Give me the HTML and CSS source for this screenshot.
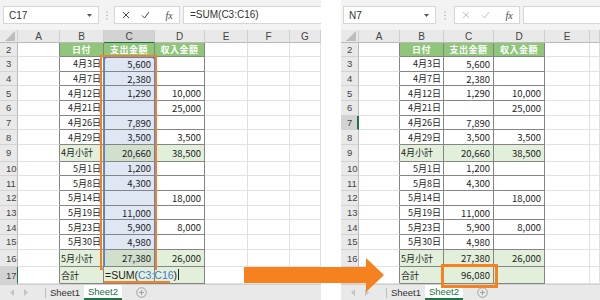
FILE: index.html
```html
<!DOCTYPE html>
<html lang="ja">
<head>
    <meta charset="UTF-8">
    <title>SUM</title>
    <link rel="stylesheet" href="styles.css">
</head>
<body>
<div class="page">

    <!-- before: editing C17 -->
    <section class="sheet sheet-left">
        <div class="toolbar">
            <div class="namebox">C17<svg width="5" height="3"><polygon points="0,0 5,0 2.5,3" fill="#555"/></svg></div>
            <div class="dots"><svg width="2" height="9"><circle cx="1" cy="1" r="0.8" fill="#b5b5b5"/><circle cx="1" cy="4.5" r="0.8" fill="#b5b5b5"/><circle cx="1" cy="8" r="0.8" fill="#b5b5b5"/></svg></div>
            <div class="fxbox">
                <span class="slot"><svg width="8" height="8"><path d="M1 1 L7 7 M7 1 L1 7" stroke="#444" stroke-width="1"/></svg></span>
                <span class="slot"><svg width="9" height="8"><path d="M1 4.5 L3.5 7 L8 1" stroke="#444" stroke-width="1" fill="none"/></svg></span>
                <span class="slot fx">fx</span>
            </div>
            <div class="formula">=SUM(C3:C16)</div>
        </div>

        <div class="row colhead">
            <span class="corner"><svg width="10" height="10"><polygon points="10,0 10,10 0,10" fill="#bdbdbd"/></svg></span>
            <span>A</span><span>B</span><span class="on">C</span><span>D</span><span>E</span><span>F</span><span>G</span>
        </div>
        <div class="row h2"><span class="rh">2</span><span class="edge"></span><span class="t hd">日付</span><span class="t hd">支出金額</span><span class="t hd">収入金額</span><span></span><span></span><span></span></div>
        <div class="row"><span class="rh">3</span><span class="edge"></span><span class="t d">4月3日</span><span class="t n s">5,600</span><span class="t n"></span><span></span><span></span><span></span></div>
        <div class="row"><span class="rh">4</span><span class="edge"></span><span class="t d">4月7日</span><span class="t n s">2,380</span><span class="t n"></span><span></span><span></span><span></span></div>
        <div class="row"><span class="rh">5</span><span class="edge"></span><span class="t d">4月12日</span><span class="t n s">1,290</span><span class="t n">10,000</span><span></span><span></span><span></span></div>
        <div class="row"><span class="rh">6</span><span class="edge"></span><span class="t d">4月21日</span><span class="t n s"></span><span class="t n">25,000</span><span></span><span></span><span></span></div>
        <div class="row"><span class="rh">7</span><span class="edge"></span><span class="t d">4月26日</span><span class="t n s">7,890</span><span class="t n"></span><span></span><span></span><span></span></div>
        <div class="row"><span class="rh">8</span><span class="edge"></span><span class="t d">4月29日</span><span class="t n s">3,500</span><span class="t n">3,500</span><span></span><span></span><span></span></div>
        <div class="row r9"><span class="rh">9</span><span class="edge"></span><span class="t g l">4月小計</span><span class="t n g s">20,660</span><span class="t n g">38,500</span><span></span><span></span><span></span></div>
        <div class="row"><span class="rh">10</span><span class="edge"></span><span class="t d">5月1日</span><span class="t n s">1,200</span><span class="t n"></span><span></span><span></span><span></span></div>
        <div class="row"><span class="rh">11</span><span class="edge"></span><span class="t d">5月8日</span><span class="t n s">4,300</span><span class="t n"></span><span></span><span></span><span></span></div>
        <div class="row"><span class="rh">12</span><span class="edge"></span><span class="t d">5月14日</span><span class="t n s"></span><span class="t n">18,000</span><span></span><span></span><span></span></div>
        <div class="row"><span class="rh">13</span><span class="edge"></span><span class="t d">5月19日</span><span class="t n s">11,000</span><span class="t n"></span><span></span><span></span><span></span></div>
        <div class="row"><span class="rh">14</span><span class="edge"></span><span class="t d">5月23日</span><span class="t n s">5,900</span><span class="t n">8,000</span><span></span><span></span><span></span></div>
        <div class="row"><span class="rh">15</span><span class="edge"></span><span class="t d">5月30日</span><span class="t n s">4,980</span><span class="t n"></span><span></span><span></span><span></span></div>
        <div class="row r16"><span class="rh">16</span><span class="edge"></span><span class="t g l">5月小計</span><span class="t n g s">27,380</span><span class="t n g">26,000</span><span></span><span></span><span></span></div>
        <div class="row r17"><span class="rh on">17</span><span class="edge"></span><span class="t g l">合計</span><span class="t g edit"><span class="typed">=SUM(<b>C3:C16</b>)<i class="caret"></i></span></span><span class="t g"></span><span></span><span></span><span></span></div>

        <div class="tabs">
            <svg class="nav" width="20" height="7"><polygon points="4,0 4,7 0,3.5" fill="#c4c4c4"/><polygon points="14,0 14,7 18,3.5" fill="#c4c4c4"/></svg>
            <span class="sep"></span>
            <span class="tab">Sheet1</span>
            <span class="tab on">Sheet2</span>
            <svg class="add" width="11" height="11"><circle cx="5.5" cy="5.5" r="4.8" fill="none" stroke="#9a9a9a" stroke-width="0.9"/><path d="M5.5 3 V8 M3 5.5 H8" stroke="#9a9a9a" stroke-width="0.9"/></svg>
        </div>

        <div class="range"><i class="hdl tl"></i><i class="hdl tr"></i><i class="hdl bl"></i><i class="hdl br"></i></div>
        <div class="frame frame-range"></div>
    </section>

    <div class="gap"></div>

    <!-- after: result -->
    <section class="sheet sheet-right">
        <div class="toolbar">
            <div class="namebox">N7<svg width="5" height="3"><polygon points="0,0 5,0 2.5,3" fill="#555"/></svg></div>
            <div class="dots"><svg width="2" height="9"><circle cx="1" cy="1" r="0.8" fill="#b5b5b5"/><circle cx="1" cy="4.5" r="0.8" fill="#b5b5b5"/><circle cx="1" cy="8" r="0.8" fill="#b5b5b5"/></svg></div>
            <div class="fxbox">
                <span class="slot"><svg width="8" height="8"><path d="M1 1 L7 7 M7 1 L1 7" stroke="#c2c2c2" stroke-width="1"/></svg></span>
                <span class="slot"><svg width="9" height="8"><path d="M1 4.5 L3.5 7 L8 1" stroke="#c2c2c2" stroke-width="1" fill="none"/></svg></span>
                <span class="slot fx">fx</span>
            </div>
            <div class="formula"></div>
        </div>

        <div class="row colhead">
            <span class="corner"><svg width="10" height="10"><polygon points="10,0 10,10 0,10" fill="#bdbdbd"/></svg></span>
            <span>A</span><span>B</span><span>C</span><span>D</span><span>E</span><span></span>
        </div>
        <div class="row h2"><span class="rh">2</span><span class="edge"></span><span class="t hd">日付</span><span class="t hd">支出金額</span><span class="t hd">収入金額</span><span></span><span></span></div>
        <div class="row"><span class="rh">3</span><span class="edge"></span><span class="t d">4月3日</span><span class="t n">5,600</span><span class="t n"></span><span></span><span></span></div>
        <div class="row"><span class="rh">4</span><span class="edge"></span><span class="t d">4月7日</span><span class="t n">2,380</span><span class="t n"></span><span></span><span></span></div>
        <div class="row"><span class="rh">5</span><span class="edge"></span><span class="t d">4月12日</span><span class="t n">1,290</span><span class="t n">10,000</span><span></span><span></span></div>
        <div class="row"><span class="rh">6</span><span class="edge"></span><span class="t d">4月21日</span><span class="t n"></span><span class="t n">25,000</span><span></span><span></span></div>
        <div class="row"><span class="rh on-r">7</span><span class="edge"></span><span class="t d">4月26日</span><span class="t n">7,890</span><span class="t n"></span><span></span><span></span></div>
        <div class="row"><span class="rh">8</span><span class="edge"></span><span class="t d">4月29日</span><span class="t n">3,500</span><span class="t n">3,500</span><span></span><span></span></div>
        <div class="row r9"><span class="rh">9</span><span class="edge"></span><span class="t g l">4月小計</span><span class="t n g">20,660</span><span class="t n g">38,500</span><span></span><span></span></div>
        <div class="row"><span class="rh">10</span><span class="edge"></span><span class="t d">5月1日</span><span class="t n">1,200</span><span class="t n"></span><span></span><span></span></div>
        <div class="row"><span class="rh">11</span><span class="edge"></span><span class="t d">5月8日</span><span class="t n">4,300</span><span class="t n"></span><span></span><span></span></div>
        <div class="row"><span class="rh">12</span><span class="edge"></span><span class="t d">5月14日</span><span class="t n"></span><span class="t n">18,000</span><span></span><span></span></div>
        <div class="row"><span class="rh">13</span><span class="edge"></span><span class="t d">5月19日</span><span class="t n">11,000</span><span class="t n"></span><span></span><span></span></div>
        <div class="row"><span class="rh">14</span><span class="edge"></span><span class="t d">5月23日</span><span class="t n">5,900</span><span class="t n">8,000</span><span></span><span></span></div>
        <div class="row"><span class="rh">15</span><span class="edge"></span><span class="t d">5月30日</span><span class="t n">4,980</span><span class="t n"></span><span></span><span></span></div>
        <div class="row r16"><span class="rh">16</span><span class="edge"></span><span class="t g l">5月小計</span><span class="t n g">27,380</span><span class="t n g">26,000</span><span></span><span></span></div>
        <div class="row r17"><span class="rh">17</span><span class="edge"></span><span class="t g l">合計</span><span class="t n g">96,080</span><span class="t g"></span><span></span><span></span></div>

        <div class="tabs">
            <svg class="nav" width="20" height="7"><polygon points="4,0 4,7 0,3.5" fill="#c4c4c4"/><polygon points="14,0 14,7 18,3.5" fill="#c4c4c4"/></svg>
            <span class="sep"></span>
            <span class="tab">Sheet1</span>
            <span class="tab on">Sheet2</span>
            <svg class="add" width="11" height="11"><circle cx="5.5" cy="5.5" r="4.8" fill="none" stroke="#9a9a9a" stroke-width="0.9"/><path d="M5.5 3 V8 M3 5.5 H8" stroke="#9a9a9a" stroke-width="0.9"/></svg>
        </div>

        <div class="frame frame-result"></div>
    </section>

    <svg class="arrow" width="140" height="34"><polygon points="0,9 122,9 122,0 140,17 122,34 122,25 0,25" fill="#f5821f"/></svg>
</div>
</body>
</html>
```

FILE: styles.css
```css
* {
    box-sizing: border-box;
}

body {
    margin: 0;
    background: #fff;
    color: #1e1e1e;
    font-family: "Noto Sans CJK JP", "Noto Sans", sans-serif;
}

.page {
    position: relative;
    display: flex;
    width: 600px;
    height: 300px;
    overflow: hidden;
}

.gap {
    width: 20px;
}

.sheet {
    position: relative;
    display: flex;
    flex-direction: column;
    height: 300px;
    overflow: hidden;
}

.sheet-left {
    width: 321px;
    --cols: 18px 42px 44px 51px 50px 43px 42px 31px;
}

.sheet-right {
    width: 259px;
    --cols: 18px 41px 44px 50px 51px 45px 10px;
}

/* formula bar */
.toolbar {
    display: flex;
    flex-shrink: 0;
    align-items: flex-start;
    height: 30px;
    padding-top: 6px;
    background: #f3f3f3;
}

.namebox,
.fxbox,
.formula {
    height: 18px;
    background: #fff;
    border: 1px solid #d6d6d6;
}

.namebox {
    display: flex;
    align-items: center;
    justify-content: space-between;
    padding: 0 6px 0 5px;
    font-family: "Liberation Sans", sans-serif;
    font-size: 10px;
    color: #333;
}

.sheet-left .namebox {
    width: 96px;
    margin-left: 3px;
}

.sheet-right .namebox {
    width: 93px;
    margin-left: 2px;
}

.dots {
    display: flex;
    align-items: center;
    justify-content: center;
    width: 15px;
    height: 18px;
}

.sheet-right .dots {
    width: 18px;
}

.fxbox {
    display: flex;
    align-items: center;
    width: 66px;
    padding-left: 1px;
}

.slot {
    display: flex;
    align-items: center;
    justify-content: center;
    width: 20px;
    height: 16px;
}

.fx {
    margin-left: 4px;
    font-family: "Liberation Serif", serif;
    font-style: italic;
    font-size: 10px;
    color: #444;
}

.formula {
    flex: 1;
    margin-left: 3px;
    padding-left: 6px;
    border-right: 0;
    font-family: "Liberation Sans", sans-serif;
    font-size: 10px;
    line-height: 16px;
    color: #333;
}

/* grid */
.row {
    display: grid;
    flex-shrink: 0;
    grid-template-columns: var(--cols);
    height: 14.7px;
}

.row > span {
    display: flex;
    align-items: center;
    overflow: hidden;
    white-space: nowrap;
    border-right: 1px solid #e1e1e1;
    border-bottom: 1px solid #e1e1e1;
    font-size: 9px;
}

.colhead {
    height: 13px;
}

.colhead > span {
    justify-content: center;
    background: #e9e9e9;
    border-right-color: #cfcfcf;
    border-bottom-color: #b9b9b9;
    font-family: "Liberation Sans", sans-serif;
    font-size: 10px;
    color: #444;
}

.colhead > .on {
    background: #d3d3d3;
    border-bottom-color: #217346;
}

.colhead > .corner {
    justify-content: flex-end;
    align-items: flex-end;
    padding: 0 2px 1px 0;
}

.h2 {
    height: 14px;
}

.r9 {
    height: 16.5px;
}

.r16 {
    height: 17.5px;
}

.r17 {
    height: 17px;
}

.row > .rh {
    padding-left: 6px;
    background: #e9e9e9;
    border-right-color: #b9b9b9;
    border-bottom-color: #d3d3d3;
    font-family: "Liberation Sans", sans-serif;
    font-size: 9.5px;
    color: #444;
}

.row > .rh.on {
    background: #d3d3d3;
    border-right-color: #217346;
}

.row > .rh.on-r {
    background: #d3d3d3;
    border-right: 2px solid #217346;
}

.row > .edge {
    border-right-color: #858585;
}

.row > .t {
    border-right-color: #858585;
    border-bottom-color: #858585;
}

.row > .n {
    font-size: 9.5px;
}

.row > .hd {
    justify-content: center;
    background: #8fc67a;
    color: #fff;
    font-weight: bold;
    letter-spacing: 0.5px;
}

.g {
    background: #e2efda;
}

.n,
.d {
    justify-content: flex-end;
    padding-right: 3px;
}

.d {
    padding-right: 2px;
}

.l {
    padding-left: 1px;
}

.s {
    background: #dfe7f5;
}

.s.g {
    background: #d1dfcd;
}

/* C17 while typing: text runs over into D17 */
.row > .edit {
    position: relative;
    z-index: 1;
    overflow: visible;
    align-items: flex-end;
    padding-left: 1px;
    font-family: "Liberation Sans", sans-serif;
    font-size: 10.5px;
    color: #222;
}

.typed {
    display: flex;
    flex-shrink: 0;
    align-items: center;
    width: 66px;
    height: 15px;
    margin-left: -1px;
    padding-left: 1px;
    border-bottom: 2.5px solid #f5821f;
}

.typed b {
    font-weight: normal;
    color: #3d7ad6;
}

.caret {
    flex-shrink: 0;
    width: 1px;
    height: 11px;
    margin-left: 1px;
    background: #222;
}

/* sheet tabs */
.tabs {
    display: flex;
    flex: 1;
    align-items: stretch;
    background: #e9e9e9;
    border-top: 1px solid #d0d0d0;
    font-family: "Liberation Sans", sans-serif;
    font-size: 9.5px;
    color: #333;
}

.nav {
    align-self: center;
    margin-left: 10px;
}

.sep {
    align-self: center;
    width: 1px;
    height: 10px;
    margin-left: 15px;
    background: #bdbdbd;
}

.tab {
    display: flex;
    align-items: center;
    justify-content: center;
    width: 38px;
}

.tab.on {
    background: #fff;
    color: #217346;
    border-bottom: 2px solid #217346;
}

.add {
    align-self: center;
    margin-left: 14px;
}

/* marks over the sheet */
.range {
    position: absolute;
    left: 104px;
    top: 57px;
    width: 51px;
    height: 211px;
    border: 1px solid #4a86e8;
}

.hdl {
    position: absolute;
    width: 3px;
    height: 3px;
    background: #4a86e8;
}

.tl { left: -2px; top: -2px; }
.tr { right: -2px; top: -2px; }
.bl { left: -2px; bottom: -2px; }
.br { right: -2px; bottom: -2px; }

.frame {
    position: absolute;
    border: 2.5px solid #f5821f;
}

.frame-range {
    left: 100px;
    top: 55px;
    width: 57px;
    height: 215px;
}

.frame-result {
    left: 100px;
    top: 264px;
    width: 57px;
    height: 24px;
    border-width: 3px;
}

.arrow {
    position: absolute;
    left: 244px;
    top: 258px;
}
```
